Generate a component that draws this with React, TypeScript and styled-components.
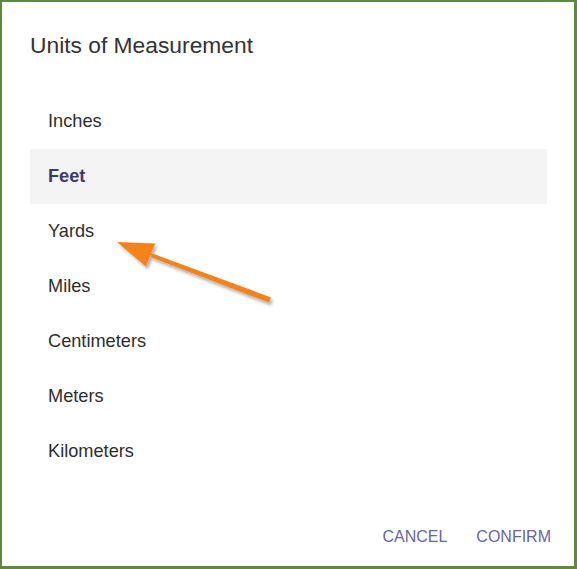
import styled, { createGlobalStyle } from 'styled-components'

const units = ['Inches', 'Feet', 'Yards', 'Miles', 'Centimeters', 'Meters', 'Kilometers']
const selectedUnit = 'Feet'

const GlobalStyle = createGlobalStyle`
  html, body {
    margin: 0;
    padding: 0;
    background: #ffffff;
  }
  body {
    font-family: "Liberation Sans", Arial, sans-serif;
  }
`

type ItemProp = {
  selected: boolean
}

export default function App() {
  return (
    <>
      <GlobalStyle />
      <Div_Frame>
        <H2_Title>Units of Measurement</H2_Title>
        <Ul_List>
          {units.map(unit => (
            <Li_Item key={unit} selected={unit === selectedUnit}>
              {unit}
            </Li_Item>
          ))}
        </Ul_List>
        <Div_Actions>
          <Button_Action>Cancel</Button_Action>
          <Button_Action>Confirm</Button_Action>
        </Div_Actions>
        <Svg_Arrow viewBox="108 232 170 80" width="170" height="80">
          <defs>
            <filter id="arrowShadow" x="-20%" y="-40%" width="140%" height="180%">
              <feDropShadow dx="2" dy="3" stdDeviation="1.6" floodColor="#000" floodOpacity="0.3" />
            </filter>
          </defs>
          <g filter="url(#arrowShadow)" fill="#f7821d">
            <polygon points="117,242 155.2,243.4 145.9,266.4" />
            <polygon points="149.6,252.4 151.6,257.4 269,302.6 271,297.4" />
          </g>
        </Svg_Arrow>
      </Div_Frame>
    </>
  )
}

const Div_Frame = styled.div`
  position: relative;
  box-sizing: border-box;
  width: 577px;
  height: 569px;
  border: 2px solid #5e8a3d;
  border-right-width: 3px;
  border-bottom-width: 3px;
  background: #ffffff;
  display: flex;
  flex-direction: column;
  overflow: hidden;
`
const H2_Title = styled.h2`
  margin: 0;
  padding: 27px 28px 0;
  height: 32px;
  line-height: 32px;
  font-size: 22.8px;
  font-weight: 400;
  color: #333333;
`
const Ul_List = styled.ul`
  list-style: none;
  margin: 33px 27px 0 28px;
  padding: 0;
`
const Li_Item = styled.li<ItemProp>`
  height: 55px;
  display: flex;
  align-items: center;
  padding-left: 18px;
  font-size: 18.2px;
  font-weight: ${props => (props.selected ? 700 : 400)};
  color: ${props => (props.selected ? '#3d3a6e' : '#2e2e2e')};
  background: ${props => (props.selected ? '#f4f4f4' : 'transparent')};
`
const Div_Actions = styled.div`
  display: flex;
  justify-content: flex-end;
  gap: 11px;
  margin-top: auto;
  padding: 0 14px 9px 0;
`
const Button_Action = styled.button`
  border: none;
  background: transparent;
  height: 41px;
  padding: 0 9px;
  font-family: "Liberation Sans", Arial, sans-serif;
  font-size: 16px;
  text-transform: uppercase;
  color: #67669a;
  cursor: pointer;
`
const Svg_Arrow = styled.svg`
  position: absolute;
  left: 106px;
  top: 230px;
  overflow: visible;
  pointer-events: none;
`
